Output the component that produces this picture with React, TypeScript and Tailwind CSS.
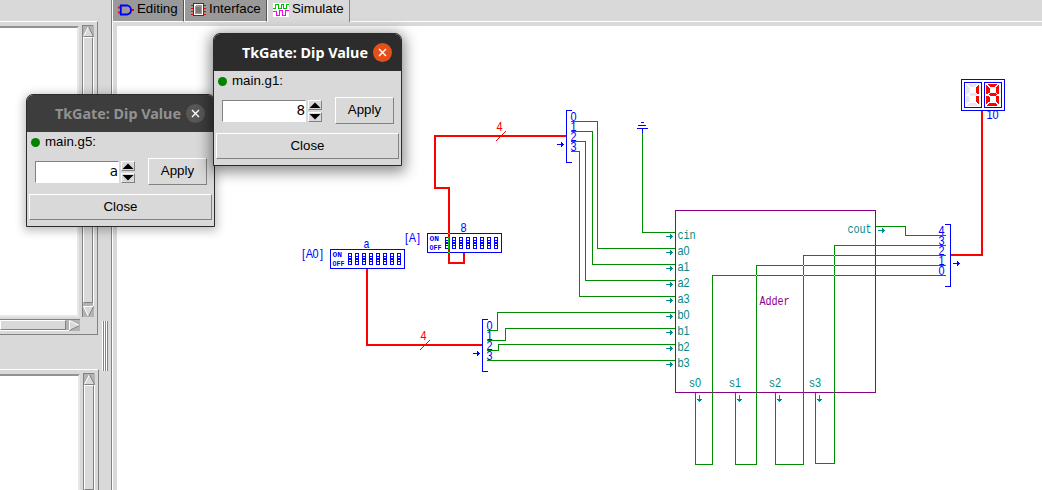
import React from "react";

const GREEN = "#008b00";
const BLUE = "#0000ff";
const RED = "#ff0000";
const TEAL = "#008b8b";
const PURPLE = "#8b008b";

type LabelProps = { x: number; y: number; text: string; color: string; mono?: boolean };

/* Fixed-pitch diagram label: every glyph sits in a 6px cell. */
function Label({ x, y, text, color, mono }: LabelProps) {
  const squeeze = mono ? 0.78 : 0.84;
  const xs = text
    .split("")
    .map((_, i) => (i * 6 + 3.5) / squeeze)
    .join(" ");
  return (
    <text
      transform={`translate(${x} ${y}) scale(${squeeze} 1)`}
      x={xs}
      y={0}
      textAnchor="middle"
      fill={color}
      fontSize={13}
      fontFamily={mono ? '"Liberation Mono", monospace' : '"Liberation Sans", sans-serif'}
    >
      {text}
    </text>
  );
}

function Arrow({ x, y, color, down }: { x: number; y: number; color: string; down?: boolean }) {
  return (
    <g transform={`translate(${x} ${y})${down ? " rotate(90)" : ""}`} fill={color}>
      <rect x={0} y={0} width={7} height={1} />
      <rect x={4} y={-2} width={1} height={5} />
      <rect x={5} y={-1} width={1} height={3} />
    </g>
  );
}

function Wire({ d, color = GREEN, w = 1 }: { d: string; color?: string; w?: number }) {
  return <path d={d} fill="none" stroke={color} strokeWidth={w} />;
}

function Slash({ x, y }: { x: number; y: number }) {
  return (
    <g fill={RED}>
      {[0, 1, 2, 3, 4, 5, 6, 7, 8, 9].map((i) => (
        <rect key={i} x={x + i} y={y - i} width={1} height={1} />
      ))}
    </g>
  );
}

function DipSwitch({ x, y }: { x: number; y: number }) {
  return (
    <g>
      <rect x={x + 0.5} y={y + 0.5} width={74} height={19} fill="none" stroke={BLUE} />
      <g fill={BLUE} fontFamily='"Liberation Mono", monospace' fontWeight={700} fontSize={7}>
        <text x={x + 2.5} y={y + 8} textLength={9.5} lengthAdjust="spacingAndGlyphs">ON</text>
        <text x={x + 2.5} y={y + 17} textLength={12} lengthAdjust="spacingAndGlyphs">OFF</text>
      </g>
      {[0, 1, 2, 3, 4, 5, 6, 7].map((i) => (
        <g key={i} transform={`translate(${x + 18 + i * 7} ${y + 4})`} fill={BLUE}>
          <path d="M0 0h4v12h-4zM1 1v2h2v-2zM1 4v1h2v-1zM1 7v1h2v-1zM1 9v2h2v-2z" fillRule="evenodd" />
        </g>
      ))}
    </g>
  );
}

const CROSSINGS = [
  [756, 275], [803, 275], [834, 275], [803, 265], [834, 265], [834, 255],
];

function Segments({ x, lit }: { x: number; lit: boolean }) {
  const off = lit ? RED : "#e6e6fa";
  return (
    <g transform={`translate(${x} 84)`}>
      <path d="M1.500 0h10l-2.500 3h-5z" fill={off} />
      <path d="M2.500 10.500l1.500-1.500h5l1.500 1.500l-1.500 1.500h-5z" fill={off} />
      <path d="M1.500 21.500h10l-2.500-3h-5z" fill={off} />
      <path d="M0 1l3.500 3v4.500l-2.500 1.500h-1z" fill={off} />
      <path d="M0 20.500l3.500-3v-4.500l-2.500-1.500h-1z" fill={off} />
      <path d="M13 1l-3.500 3v4.500l2.500 1.500h1z" fill={RED} />
      <path d="M13 20.500l-3.500-3v-4.500l2.500-1.500h1z" fill={RED} />
    </g>
  );
}

function Circuit() {
  return (
    <svg className="block" width={925} height={464} viewBox="117 26 925 464" shapeRendering="crispEdges">
      {/* buses */}
      <Wire color={RED} w={2} d="M566 136H435V188H449V263H464V253" />
      <Wire color={RED} w={2} d="M367 269V345H482" />
      <Wire color={RED} w={2} d="M951 255H982V111" />
      <Slash x={496} y={140} />
      <Slash x={420} y={349} />
      <Label x={496} y={131} text="4" color={RED} />
      <Label x={420} y={340} text="4" color={RED} />

      {/* dip switches */}
      <DipSwitch x={330} y={249} />
      <DipSwitch x={427} y={233} />
      <rect x={448} y={233} width={2} height={1} fill="#00ff00" />
      <rect x={448} y={252} width={2} height={1} fill="#00ff00" />
      <rect x={448} y={237} width={1} height={12} fill="#00c800" />
      <Label x={363} y={248} text="a" color={BLUE} mono />
      <Label x={460} y={232} text="8" color={BLUE} />
      <Label x={300} y={258} text="[A0]" color={BLUE} />
      <Label x={403} y={242} text="[A]" color={BLUE} />

      {/* splitters */}
      <Wire color={BLUE} d="M572 110.500H566.500V162.500H572" />
      <Wire color={BLUE} d="M488 319.500H482.500V371.500H488" />
      <Wire color={BLUE} d="M945 224.500H950.500V286.500H945" />
      {["0", "1", "2", "3"].map((t, i) => (
        <g key={t}>
          <Label x={570} y={121 + i * 10} text={t} color={BLUE} />
          <Label x={486} y={330 + i * 10} text={t} color={BLUE} />
        </g>
      ))}
      {["4", "3", "2", "1", "0"].map((t, i) => (
        <Label key={t} x={938} y={235 + i * 10} text={t} color={BLUE} />
      ))}
      <Arrow x={557} y={144} color={BLUE} />
      <Arrow x={473} y={353} color={BLUE} />
      <Arrow x={953} y={263} color={BLUE} />

      {/* ground */}
      <Wire color={BLUE} d="M641 122.500H644M638 125.500H646M637 128.500H648M642.500 128V133" />
      <Wire d="M642.500 133V232.500H675" />

      {/* operand wires */}
      <Wire d="M571 121.500H597.500V248.500H675" />
      <Wire d="M571 131.500H592.500V264.500H675" />
      <Wire d="M571 141.500H585.500V280.500H675" />
      <Wire d="M571 151.500H579.500V296.500H675" />
      <Wire d="M487 330.500H497.500V312.500H675" />
      <Wire d="M487 340.500H505.500V328.500H675" />
      <Wire d="M487 350.500H498.500V344.500H675" />
      <Wire d="M487 360.500H675" />

      {/* adder block */}
      <rect x={675.5} y={210.5} width={200} height={182} fill="none" stroke={PURPLE} />
      <Label x={759} y={305} text="Adder" color={PURPLE} mono />
      {["cin", "a0", "a1", "a2", "a3", "b0", "b1", "b2", "b3"].map((t, i) => (
        <g key={t}>
          <Label x={677} y={239 + i * 16} text={t} color={TEAL} mono={i === 0} />
          <Arrow x={666} y={236 + i * 16} color={TEAL} />
        </g>
      ))}
      {["s0", "s1", "s2", "s3"].map((t, i) => (
        <g key={t}>
          <Label x={688.5 + i * 40} y={387} text={t} color={TEAL} />
          <Arrow x={700 + i * 40} y={395} color={TEAL} down />
        </g>
      ))}
      <Label x={847} y={233} text="cout" color={TEAL} mono />
      <Arrow x={878} y={230} color={TEAL} />

      {/* sum outputs */}
      <Wire d="M695.500 393V464.500H712.500V275.500H946" />
      <Wire d="M735.500 393V464.500H756.500V265.500H946" />
      <Wire d="M775.500 393V464.500H803.500V255.500H946" />
      <Wire d="M815.500 393V463.500H834.500V245.500H946" />
      <Wire d="M876 226.500H905.500V235.500H946" />
      {CROSSINGS.map(([x, y]) => (
        <rect key={`${x}-${y}`} x={x} y={y} width={1} height={1} fill="#f0fff0" />
      ))}

      {/* hex display */}
      <rect x={961.5} y={79.5} width={43} height={31} fill="none" stroke={BLUE} />
      <rect x={964.5} y={82.5} width={17} height={25} fill="none" stroke={BLUE} />
      <rect x={984.5} y={82.5} width={17} height={25} fill="none" stroke={BLUE} />
      <Segments x={966} lit={false} />
      <Segments x={986} lit />
      <Label x={986} y={119} text="10" color={BLUE} />
    </svg>
  );
}

const RAISED = "border border-t-white border-l-white border-r-[#828282] border-b-[#828282] bg-[#d9d9d9]";

function DipDialog({ name, value, active }: { name: string; value: string; active?: boolean }) {
  return (
    <div
      className={`flex h-[133px] w-[189px] flex-col overflow-hidden rounded-t-[7px] border border-[#2b2b2b] bg-[#d9d9d9] text-[13.3px] leading-4 text-black ${
        active ? "shadow-[0_3px_14px_3px_rgba(0,0,0,0.45)]" : "shadow-[0_2px_10px_2px_rgba(0,0,0,0.25)]"
      }`}
    >
      <div
        className={`flex h-[37px] shrink-0 items-center justify-end gap-[5px] pr-[9px] ${
          active ? "bg-[#2c2c2c] text-white" : "bg-[#3d3d3d] text-[#929292]"
        }`}
      >
        <span className="whitespace-nowrap font-['Noto_Sans',sans-serif] text-[14.35px] font-bold">
          TkGate: Dip Value
        </span>
        <span
          className={`flex h-[19px] w-[19px] items-center justify-center rounded-full ${
            active ? "bg-[#e2501c]" : "bg-[#575757]"
          }`}
        >
          <svg width="9" height="9" viewBox="0 0 9 9">
            <path d="M1 1l7 7M8 1l-7 7" stroke="#fff" strokeWidth="1.4" />
          </svg>
        </span>
      </div>
      <div className="flex h-[23px] items-start gap-[5px] pl-1">
        <span className="mt-[6px] h-[9px] w-[9px] rounded-full bg-[#008400]" />
        <span className="mt-[2px]">{name}</span>
      </div>
      <div className="flex items-start pt-[3px] pl-2">
        <div className="mt-[3px] h-[22px] w-[84px] border border-t-[#828282] border-l-[#828282] border-r-white border-b-white bg-white text-right font-['DejaVu_Sans',sans-serif] text-[13.5px] leading-[19px]">
          {value}
        </div>
        <div className="mt-[3px] ml-[2px] flex flex-col gap-[2px]">
          <span className={`flex h-[10px] w-[14px] items-center justify-center ${RAISED}`}>
            <svg width="12" height="6" viewBox="0 0 12 6"><path d="M0.500 6L6 0.500L11.500 6z" /></svg>
          </span>
          <span className={`flex h-[10px] w-[14px] items-center justify-center ${RAISED}`}>
            <svg width="12" height="6" viewBox="0 0 12 6"><path d="M0.500 0L6 5.500L11.500 0z" /></svg>
          </span>
        </div>
        <button className={`ml-[13px] h-[27px] w-[59px] pb-[1px] ${RAISED}`}>Apply</button>
      </div>
      <button className={`mt-[9px] ml-[2px] h-[26px] w-[183px] pb-[1px] ${RAISED}`}>Close</button>
    </div>
  );
}

function Triangle({ dir }: { dir: "up" | "down" | "right" }) {
  const rot = dir === "up" ? 0 : dir === "down" ? 180 : 90;
  return (
    <svg className="block shrink-0" width="11" height="11" viewBox="0 0 11 11">
      <rect width="11" height="11" fill="#b3b3b3" />
      <g transform={`rotate(${rot} 5.5 5.5)`}>
        <path d="M5.5 0.500L10.500 10.500H0.500z" fill="#d9d9d9" />
      </g>
      {dir === "up" && <path d="M5.500 0.500L0.500 10.500" stroke="#fff" />}
      {dir === "up" && <path d="M0.500 10.500H10.500L5.500 0.500" stroke="#828282" fill="none" />}
      {dir === "down" && <path d="M10.500 0.500H0.500L5.500 10.500" stroke="#fff" fill="none" />}
      {dir === "down" && <path d="M5.500 10.500L10.500 0.500" stroke="#828282" />}
      {dir === "right" && <path d="M10.500 5.500L0.500 0.500V10.500" stroke="#fff" fill="none" />}
      {dir === "right" && <path d="M0.500 10.500L10.500 5.500" stroke="#828282" />}
    </svg>
  );
}

function LeftPanels() {
  return (
    <div className="flex w-[111px] shrink-0">
      <div className="flex w-[99px] shrink-0 flex-col">
        <div className="h-[21px] shrink-0" />
        <div className="flex h-[314px] w-[98px] shrink-0 flex-col border-t border-r border-b border-t-white border-r-[#828282] border-b-[#828282]">
          <div className="flex h-[295px]">
            <div className="mt-1 w-[79px] border-t-2 border-r-2 border-b-2 border-t-[#929292] border-r-[#e8e8e8] border-b-[#e8e8e8] bg-white" />
            <div className="mt-[3px] ml-[3px] flex w-[12px] flex-col border-t border-l border-r border-t-[#828282] border-l-[#828282] border-r-white bg-[#b3b3b3]">
              <Triangle dir="up" />
              <div className={`mb-[3px] flex-1 ${RAISED}`} />
              <Triangle dir="down" />
            </div>
          </div>
          <div className="mt-[2px] flex h-[12px] w-[80px] border-t border-b border-t-[#828282] border-b-white bg-[#b3b3b3]">
            <div className={`mr-[3px] flex-1 ${RAISED}`} />
            <Triangle dir="right" />
          </div>
        </div>
        <div className="h-[34px] shrink-0" />
        <div className="flex h-[121px] w-[99px] border-t border-r border-t-white border-r-[#828282]">
          <div className="mt-1 w-[80px] border-t-2 border-r-2 border-t-[#929292] border-r-[#e8e8e8] bg-white" />
          <div className="mt-[3px] ml-[3px] flex w-[12px] flex-col border-t border-l border-r border-t-[#828282] border-l-[#828282] border-r-white bg-[#b3b3b3]">
            <Triangle dir="up" />
            <div className={`flex-1 ${RAISED}`} />
          </div>
        </div>
      </div>
      <div className="mt-[321px] ml-[3px] flex h-[50px] w-[6px] bg-white">
        <span className="ml-px w-px bg-[#828282]" />
        <span className="ml-px w-px bg-[#828282]" />
        <span className="ml-px w-px bg-[#828282]" />
      </div>
    </div>
  );
}

function GateIcon() {
  return (
    <svg className="block" width="16" height="12" viewBox="0 0 16 12">
      <path d="M0 3.500H3M0 8.500H3M13 6H16" stroke="#f00" strokeWidth="2" />
      <path d="M2.800 1.500H9.500Q13 2.500 13 6T9.500 10.500H2.800z" fill="none" stroke="#00f" strokeWidth="1.800" />
    </svg>
  );
}

function ChipIcon() {
  return (
    <svg className="block" width="15" height="14" viewBox="0 0 15 14" shapeRendering="crispEdges">
      <path d="M0 2.500H15M0 5.500H15M0 8.500H15M0 11.500H15" stroke="#f00" />
      <rect x="2.500" y="0.500" width="10" height="12" fill="#fff" stroke="#8b008b" />
      <path d="M4 3l1-1h6v8l-1 1H4z" fill="#a09890" />
      <path d="M5 4h5v6H5z" fill="#807870" />
    </svg>
  );
}

function WaveIcon() {
  return (
    <svg className="block" width="16" height="14" viewBox="0 0 16 14" shapeRendering="crispEdges">
      <rect width="16" height="14" fill="#fff" />
      <path d="M0 5.500H2.500V1.500H5.500V5.500H8.500V1.500H10.500V5.500H13.500V1.500H16" fill="none" stroke="#00c000" />
      <path d="M0 8.500H3.500V12.500H6.500V7.500H9.500V12.500H12.500V7.500H16" fill="none" stroke="#f0f" />
    </svg>
  );
}

export default function App() {
  return (
    <div className="relative flex h-[490px] w-[1042px] overflow-hidden bg-[#d9d9d9] font-['Liberation_Sans',Arial,sans-serif] text-black">
      <LeftPanels />
      <div className="flex flex-1 flex-col border-l border-[#828282]">
        <div className="flex h-[22px] shrink-0 text-[13.3px] leading-[18px]">
          <div className="flex w-[72px] border-r border-b border-l border-r-[#555] border-b-white border-l-white bg-[#999] pl-[5px]">
            <span className="mt-[4px]"><GateIcon /></span>
            <span className="ml-[3px]">Editing</span>
          </div>
          <div className="flex w-[83px] border-r border-b border-l border-r-[#555] border-b-white border-l-white bg-[#999] pl-[6px]">
            <span className="mt-[3px]"><ChipIcon /></span>
            <span className="ml-[3px]">Interface</span>
          </div>
          <div className="flex w-[83px] border-r border-l border-r-[#828282] border-l-white pl-[5px]">
            <span className="mt-[3px]"><WaveIcon /></span>
            <span className="ml-[3px]">Simulate</span>
          </div>
          <div className="flex-1 border-b border-white" />
        </div>
        <div className="flex-1 border-l border-white pt-1 pl-1">
          <div className="h-[464px] w-[925px] bg-white">
            <Circuit />
          </div>
        </div>
      </div>
      <div className="absolute top-[94px] left-[26px]">
        <DipDialog name="main.g5:" value="a" />
      </div>
      <div className="absolute top-[33px] left-[213px]">
        <DipDialog name="main.g1:" value="8" active />
      </div>
    </div>
  );
}
